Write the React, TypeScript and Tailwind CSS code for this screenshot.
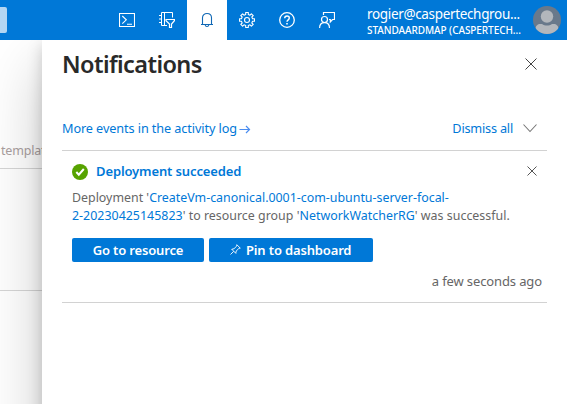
import type { ReactNode } from 'react';

function Icon({ children, size = 16, className = '' }: { children: ReactNode; size?: number; className?: string }) {
  return (
    <svg width={size} height={size} viewBox={`0 0 ${size} ${size}`} fill="none" stroke="currentColor" className={`shrink-0 ${className}`}>
      {children}
    </svg>
  );
}

const gearPath = Array.from({ length: 8 }, (_, i) => {
  const point = (r: number, deg: number) => {
    const a = ((deg + i * 45) * Math.PI) / 180;
    return `${(8 + r * Math.cos(a)).toFixed(2)} ${(8 + r * Math.sin(a)).toFixed(2)}`;
  };
  return `${i ? 'L' : 'M'}${point(5.7, -13)}L${point(7.6, -10)}L${point(7.6, 10)}L${point(5.7, 13)}`;
}).join('') + 'Z';

function TopBar() {
  return (
    <header className="relative z-20 flex h-10 w-full shrink-0 items-center bg-[#0078d7] text-white">
      <div className="h-[26px] w-[7px] rounded-r-[2px] bg-[#b3d6f3]" />
      <nav className="ml-[100px] flex h-10">
        <button className="flex w-10 items-center justify-center">
          <Icon>
            <path d="M.5 1.5h15v13H.5zM3.300 4l4 3.800-4 3.800M8 12.200h5" strokeWidth="1.1" />
          </Icon>
        </button>
        <button className="flex w-10 items-center justify-center">
          <Icon>
            <path d="M8 13.500H2.500V.5h11v5M5.500.5v13M0 3.500h3M0 7h3M0 10.500h3" strokeWidth="1" />
            <path d="M7 7.500h8.400v1.200l-2.900 3.300v3.500h-2V12L7 8.700z" strokeWidth="1.2" />
          </Icon>
        </button>
        <button className="flex w-10 items-center justify-center bg-white text-[#1068b5]">
          <Icon>
            <path d="M3.500 12.500V5.800C3.500 3.200 5.500 1.500 8 1.500s4.500 1.700 4.500 4.300v6.700M2 12.500h12M6.200 13c.3 2 3.300 2 3.600 0" strokeWidth="1.1" />
          </Icon>
        </button>
        <button className="flex w-10 items-center justify-center">
          <Icon>
            <path d={gearPath} strokeWidth="1.1" strokeLinejoin="round" />
            <circle cx="8" cy="8" r="2.500" strokeWidth="1.1" />
          </Icon>
        </button>
        <button className="flex w-10 items-center justify-center">
          <Icon>
            <circle cx="8" cy="8" r="7.300" strokeWidth="1.3" />
            <path d="M5.700 6.200C5.700 4.700 6.700 4 8 4s2.300.8 2.300 2.100C10.300 7.800 8 7.900 8 9.800" strokeWidth="1.4" />
            <path d="M7.200 11h1.600v1.500H7.200z" fill="currentColor" stroke="none" />
          </Icon>
        </button>
        <button className="flex w-10 items-center justify-center">
          <Icon>
            <circle cx="5.500" cy="7.500" r="3" strokeWidth="1.2" />
            <path d="M.6 16c0-3.400 2-5.300 4.900-5.300s5 1.900 5 5.300M4.500 3V.5h11v7h-2L11.300 10V7.500H10" strokeWidth="1.2" />
          </Icon>
        </button>
      </nav>
      <div className="ml-5 w-[157px] whitespace-nowrap">
        <div className="h-[18px] text-[13.5px] leading-[20px] tracking-[-0.34px]"><span>rogier@caspertechgrou...</span></div>
        <div className="h-[14px] text-[10px] leading-[16px] font-medium tracking-[-0.07px]"><span>STANDAARDMAP (CASPERTECH...</span></div>
      </div>
      <svg width="28" height="28" viewBox="0 0 28 28" className="ml-[9px] shrink-0">
        <defs><clipPath id="avatar"><circle cx="14" cy="14" r="14" /></clipPath></defs>
        <g clipPath="url(#avatar)">
          <path fill="#69798b" d="M0 0h28v28H0z" />
          <circle cx="14" cy="10.500" r="6.200" fill="#b3b7bc" />
          <path fill="#b3b7bc" d="M2.500 28V23c0-3 2-5 5-5h1.500c3 2 7 2 10 0h1.500c3 0 5 2 5 5v5z" />
        </g>
      </svg>
    </header>
  );
}

export default function App() {
  return (
    <div className="flex h-[404px] w-[567px] flex-col overflow-hidden bg-white font-['Noto_Sans',sans-serif] text-[13px] text-[#666]">
      <TopBar />
      <div className="flex h-[460px] shrink-0">
        <aside className="flex w-[42px] flex-col bg-white">
          <div className="flex h-[129px] items-end border-b border-[#d6d6d6] pb-[7px] whitespace-nowrap">
            <span className="ml-px text-[12.5px] tracking-[-0.2px] text-[#aaa0a0]">template</span>
          </div>
          <div className="h-[122px] border-b border-[#d6d6d6]" />
        </aside>
        <main className="relative z-10 flex w-[525px] flex-col bg-white px-5 shadow-[0_25.6px_57.6px_rgba(0,0,0,0.22),0_4.8px_14.4px_rgba(0,0,0,0.18)]">
          <div className="flex h-[48px] items-center justify-between">
            <h1 className="text-[23.5px] leading-8 font-semibold tracking-[-0.6px] text-[#292929]"><span>Notifications</span></h1>
            <Icon size={14} className="mr-[9px] text-[#444]"><path d="m1.500 1.500 11 11m0-11-11 11" /></Icon>
          </div>
          <div className="mt-[30px] flex h-[33px] items-start justify-between border-b border-[#d2d2d2] text-[12.7px] text-[#0078d7]">
            <div className="flex items-center">
              <span className="leading-5 tracking-[-0.1px]">More events in the activity log</span>
              <Icon size={12} className="mt-[2px] ml-[2px] text-[#4b8df0]"><path d="M.5 6.500h10M7 3l3.500 3.500L7 10" strokeWidth="1.2" /></Icon>
            </div>
            <div className="flex items-center">
              <span className="leading-5 tracking-[-0.2px]">Dismiss all</span>
              <Icon size={16} className="mr-[9px] ml-[9px] text-[#777]"><path d="m1.500 4.500 6.500 7 6.500-7" strokeWidth="1.1" /></Icon>
            </div>
          </div>
          <article className="flex h-[152px] flex-col border-b border-[#d2d2d2] px-[10px]">
            <div className="mt-[10px] flex h-[22px] items-center">
              <Icon>
                <circle cx="8" cy="8" r="8" fill="#57a300" stroke="none" />
                <path d="m4.300 8 2.500 2.700L11.800 5" stroke="white" strokeWidth="2" />
              </Icon>
              <h2 className="ml-2 text-[13px] font-semibold tracking-[-0.12px] text-[#0078d7]"><span>Deployment succeeded</span></h2>
              <Icon size={12} className="mr-[-1px] mb-[2px] ml-auto text-[#555]"><path d="m1.500 1.500 9 9m0-9-9 9" /></Icon>
            </div>
            <p className="mt-[6px] text-[12.4px] leading-[18px] whitespace-nowrap">
              <span>Deployment '<a className="text-[#0078d7]">CreateVm-canonical.0001-com-ubuntu-server-focal-</a></span><br />
              <span className="tracking-[0.02px]"><a className="text-[#0078d7]">2-20230425145823</a>' to resource group '<a className="text-[#0078d7]">NetworkWatcherRG</a>' was successful.</span>
            </p>
            <div className="mt-[13px] flex gap-[5px] text-[13px] font-semibold tracking-[-0.15px] text-white">
              <button className="flex h-6 w-[132px] items-center justify-center rounded-[2px] bg-[#0078d7] pt-px"><span>Go to resource</span></button>
              <button className="flex h-6 w-[164px] items-center rounded-[2px] bg-[#0078d7] pt-px pl-[21px]">
                <Icon size={11} className="mb-[3px]"><path d="M.5 10.500 3.700 7.300M1.500 5l4.500 4.500M1.800 5.300 4 4.700 6.800 2V.700l3.500 3.500H9L6.300 7 5.700 9.200" strokeWidth=".9" /></Icon>
                <span className="ml-[5px]">Pin to dashboard</span>
              </button>
            </div>
            <div className="mt-[10px] mr-[-5px] text-right tracking-[-0.12px]"><span>a few seconds ago</span></div>
          </article>
        </main>
      </div>
    </div>
  );
}
